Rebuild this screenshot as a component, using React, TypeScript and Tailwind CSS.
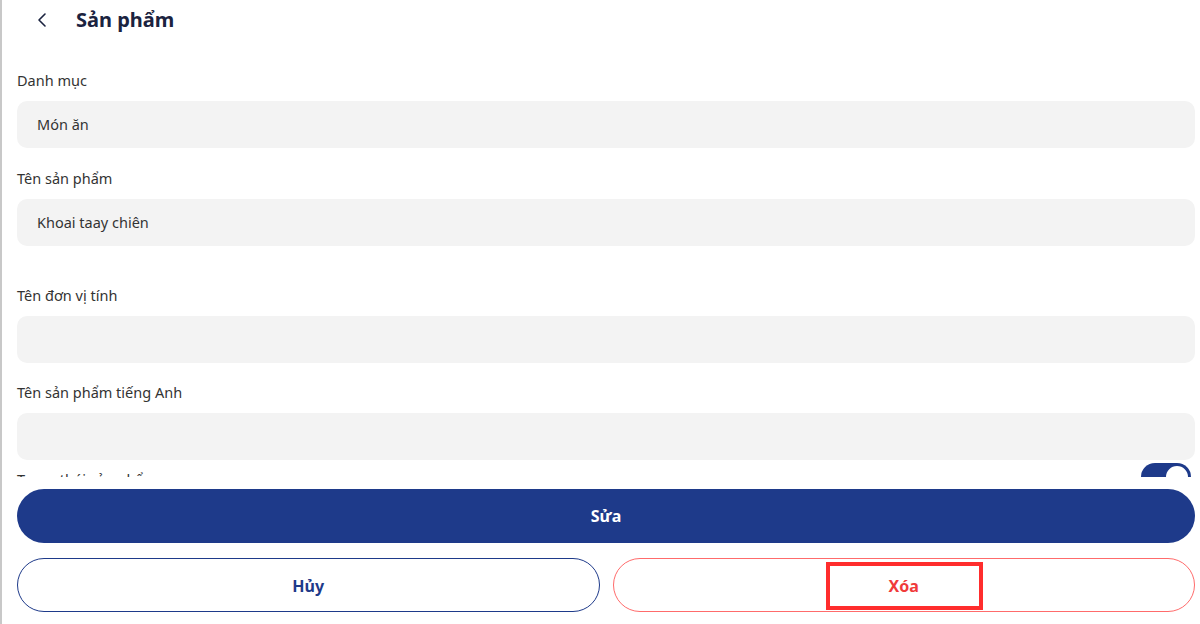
import React, { useState } from 'react';
import { ChevronLeft } from 'lucide-react';

const fields = [
  { label: 'Danh mục', value: 'Món ăn', gap: 'mt-[-9px]' },
  { label: 'Tên sản phẩm', value: 'Khoai taay chiên', gap: 'mt-[21px]' },
  { label: 'Tên đơn vị tính', value: '', gap: 'mt-[40px]' },
  { label: 'Tên sản phẩm tiếng Anh', value: '', gap: 'mt-[20px]' },
];

export default function App() {
  const [active, setActive] = useState(true);

  return (
    <div
      className="relative h-[624px] w-[1200px] overflow-hidden bg-white border-l-2 border-[#c8c8c8] flex flex-col"
      style={{ fontFamily: '"Noto Sans", "Open Sans", sans-serif' }}
    >
      {/* Scrollable form */}
      <div className="flex-1 overflow-hidden pl-[15px] pr-[5px]">
        <div className="h-[40px] flex items-center">
          <button className="ml-[13px] w-[28px] flex items-center text-[#1b2340]">
            <ChevronLeft size={24} strokeWidth={1.6} />
          </button>
          <h1 className="ml-[18px] text-[20px] font-bold text-[#1b2340] leading-none">Sản phẩm</h1>
        </div>

        <div className="pt-[40px]">
          {fields.map((f) => (
            <div key={f.label} className={f.gap}>
              <label className="block h-[20px] leading-[18px] text-[14.5px] text-[#333]">{f.label}</label>
              <div className="mt-[10px] h-[47px] rounded-[10px] bg-[#f3f3f3] flex items-center pl-[20px] text-[14.5px] text-[#333]">
                {f.value}
              </div>
            </div>
          ))}

          <div className="mt-[3px] h-[28px] flex items-start justify-between pr-[4px]">
            <span className="mt-[6px] leading-[20px] text-[14.5px] text-[#333]">Trạng thái sản phẩm</span>
            <button
              onClick={() => setActive(!active)}
              className={`relative w-[50px] h-[28px] rounded-full ${active ? 'bg-[#1e3a8a]' : 'bg-gray-300'}`}
            >
              <span className="absolute right-[1px] top-[1px] w-[26px] h-[26px] rounded-full bg-white border-2 border-[#1e3a8a]" />
            </button>
          </div>
        </div>
      </div>

      {/* Footer actions */}
      <div className="h-[147px] bg-white pl-[15px] pr-[5px] pt-[12px]">
        <button className="w-full h-[54px] rounded-full bg-[#1e3a8a] text-white text-[16px] font-bold">
          Sửa
        </button>
        <div className="mt-[15px] grid grid-cols-2 gap-[13px]">
          <button className="h-[54px] rounded-full border border-[#1e3a8a] text-[#1e3a8a] text-[16px] font-bold pt-[2px]">
            Hủy
          </button>
          <button className="h-[54px] rounded-full border border-[#ff6b6b] text-[#f03a3a] text-[16px] font-bold pt-[2px]">
            Xóa
          </button>
        </div>
      </div>

      {/* highlight annotation */}
      <div className="absolute left-[824px] top-[562px] w-[157px] h-[48px] border-4 border-[#ff2d2d] pointer-events-none" />
    </div>
  );
}
